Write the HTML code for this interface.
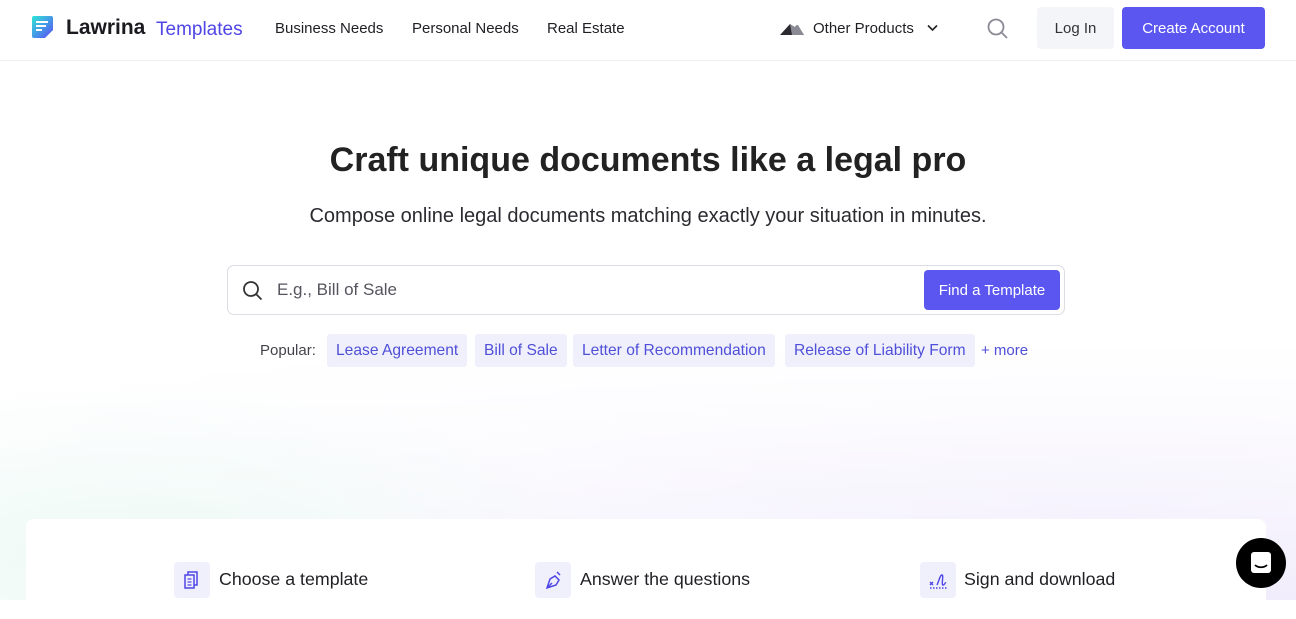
<!DOCTYPE html>
<html><head><meta charset="utf-8"><style>
*{box-sizing:border-box;margin:0;padding:0}
body{width:1296px;height:600px;overflow:hidden;font-family:"Liberation Sans",sans-serif;color:#1f1f24;position:relative;
background:linear-gradient(180deg,#fff 0,#fff 340px,rgba(255,255,255,0) 600px),radial-gradient(ellipse at 85% 100%,#efeafc 0,#f7f5fd 40%,#fff 75%),#fff}
.bg2{position:absolute;left:0;top:380px;width:600px;height:220px;background:radial-gradient(ellipse at 20% 80%,#eefaf6 0,rgba(255,255,255,0) 70%)}
header{position:absolute;top:0;left:0;width:1296px;height:61px;background:#fff;border-bottom:1px solid #eeeef2}
.a{position:absolute;white-space:nowrap}
.nav{font-size:15px;top:20px;color:#1f1f24}
.btn{position:absolute;border-radius:4px;font-size:15px;text-align:center}
h1{position:absolute;top:141px;width:100%;text-align:center;font-size:34px;font-weight:bold;color:#222}
.sub{position:absolute;top:205px;width:100%;text-align:center;font-size:20px;color:#2a2a30}
.search{position:absolute;left:227px;top:265px;width:838px;height:50px;border:1px solid #dcdce3;border-radius:7px;background:#fff}
.tag{position:absolute;top:334px;height:33px;line-height:34px;padding:0 9px;background:#f0f0fd;color:#4f4fd8;font-size:15.6px;border-radius:3px}
.card{position:absolute;left:26px;top:519px;width:1240px;height:100px;background:#fff;border-radius:8px}
.ic{position:absolute;top:562px;width:36px;height:36px;background:#f0f0fd;border-radius:4px}
.st{position:absolute;top:569px;font-size:17.8px;color:#1f1f24}
</style></head><body>
<div class="bg2"></div>
<header>
<svg class="a" style="left:32px;top:16px" width="21" height="22" viewBox="0 0 21 22"><defs><linearGradient id="g" x1="0" y1="0" x2="1" y2="1"><stop offset="0" stop-color="#2ee6d6"/><stop offset="1" stop-color="#5b4ef5"/></linearGradient></defs><path d="M2 0h17a2 2 0 0 1 2 2v12l-8 8H2a2 2 0 0 1-2-2V2a2 2 0 0 1 2-2z" fill="url(#g)"/><path d="M4 6h12M4 10h10M4 14h6" stroke="#fff" stroke-width="2"/></svg>
<div class="a" style="left:66px;top:16px;font-size:21px;font-weight:bold;color:#1a1a1f">Lawrina</div>
<div class="a" style="left:156px;top:19px;font-size:19px;color:#4f46e5">Templates</div>
<div class="a nav" style="left:275px">Business Needs</div>
<div class="a nav" style="left:412px">Personal Needs</div>
<div class="a nav" style="left:547px">Real Estate</div>
<svg class="a" style="left:780px;top:20px" width="24" height="16" viewBox="0 0 24 16"><path d="M0 15L10 4l4 4 3-3 7 10z" fill="#2a2a30"/><path d="M10 4l5 3 3-2 6 10H12z" fill="#8a8a95"/></svg>
<div class="a nav" style="left:813px">Other Products</div>
<svg class="a" style="left:927px;top:24px" width="11" height="8" viewBox="0 0 11 8"><path d="M1 1.5l4.5 4.5L10 1.5" stroke="#222" stroke-width="1.6" fill="none"/></svg>
<svg class="a" style="left:987px;top:18px" width="22" height="22" viewBox="0 0 22 22"><circle cx="9" cy="9" r="7.5" stroke="#8a8a95" stroke-width="1.8" fill="none"/><path d="M14.5 14.5l5.5 5.5" stroke="#8a8a95" stroke-width="1.8"/></svg>
<div class="btn" style="left:1037px;top:7px;width:77px;height:42px;line-height:44px;background:#f4f5f8;color:#333">Log In</div>
<div class="btn" style="left:1122px;top:7px;width:143px;height:42px;line-height:44px;background:#5b56f0;color:#fff">Create Account</div>
</header>
<h1>Craft unique documents like a legal pro</h1>
<div class="sub">Compose online legal documents matching exactly your situation in minutes.</div>
<div class="search">
<svg class="a" style="left:14px;top:14px" width="22" height="22" viewBox="0 0 22 22"><circle cx="9" cy="9" r="7" stroke="#333" stroke-width="1.8" fill="none"/><path d="M14 14l5.5 5.5" stroke="#333" stroke-width="1.8"/></svg>
<div class="a" style="left:49px;top:14px;font-size:17px;color:#55555e">E.g., Bill of Sale</div>
<div class="btn" style="left:696px;top:4px;width:136px;height:40px;line-height:42px;background:#5b56f0;color:#fff">Find a Template</div>
</div>
<div class="a" style="left:260px;top:342px;font-size:15px;color:#44444c">Popular:</div>
<div class="tag" style="left:327px">Lease Agreement</div>
<div class="tag" style="left:475px">Bill of Sale</div>
<div class="tag" style="left:573px">Letter of Recommendation</div>
<div class="tag" style="left:785px">Release of Liability Form</div>
<div class="a" style="left:981px;top:342px;font-size:15px;color:#4f4fd8">+ more</div>
<div class="card"></div>
<div class="ic" style="left:174px"><svg width="36" height="36" viewBox="0 0 36 36"><rect x="14" y="10" width="9" height="13" fill="none" stroke="#4f46e5" stroke-width="1.5"/><rect x="11" y="13" width="9" height="13" fill="#f0f0fd" stroke="#4f46e5" stroke-width="1.5"/><path d="M13.5 17h4M13.5 20h4M13.5 23h4" stroke="#4f46e5" stroke-width="1.2"/></svg></div>
<div class="st" style="left:219px">Choose a template</div>
<div class="ic" style="left:535px"><svg width="36" height="36" viewBox="0 0 36 36"><path d="M12 26l3-9 5-3 4 4-3 5z" fill="none" stroke="#4f46e5" stroke-width="1.5"/><path d="M12 26l5-5M22 10l3 3" stroke="#4f46e5" stroke-width="1.5"/></svg></div>
<div class="st" style="left:580px">Answer the questions</div>
<div class="ic" style="left:920px"><svg width="36" height="36" viewBox="0 0 36 36"><path d="M10 20l3 3M13 20l-3 3M17 23c2-4 3-10 5-10s-1 10 1 10 2-3 3-2" fill="none" stroke="#4f46e5" stroke-width="1.4"/><path d="M10 26h17" stroke="#4f46e5" stroke-width="1.4" stroke-dasharray="1.5 1.5"/></svg></div>
<div class="st" style="left:964px">Sign and download</div>
<div class="a" style="left:1236px;top:538px;width:50px;height:50px;border-radius:50%;background:#000"><svg width="50" height="50" viewBox="0 0 50 50"><rect x="15" y="14" width="20" height="21" rx="3" fill="#fff"/><path d="M19 27c3 3 9 3 12 0" stroke="#000" stroke-width="1.8" fill="none"/></svg></div>
</body></html>
